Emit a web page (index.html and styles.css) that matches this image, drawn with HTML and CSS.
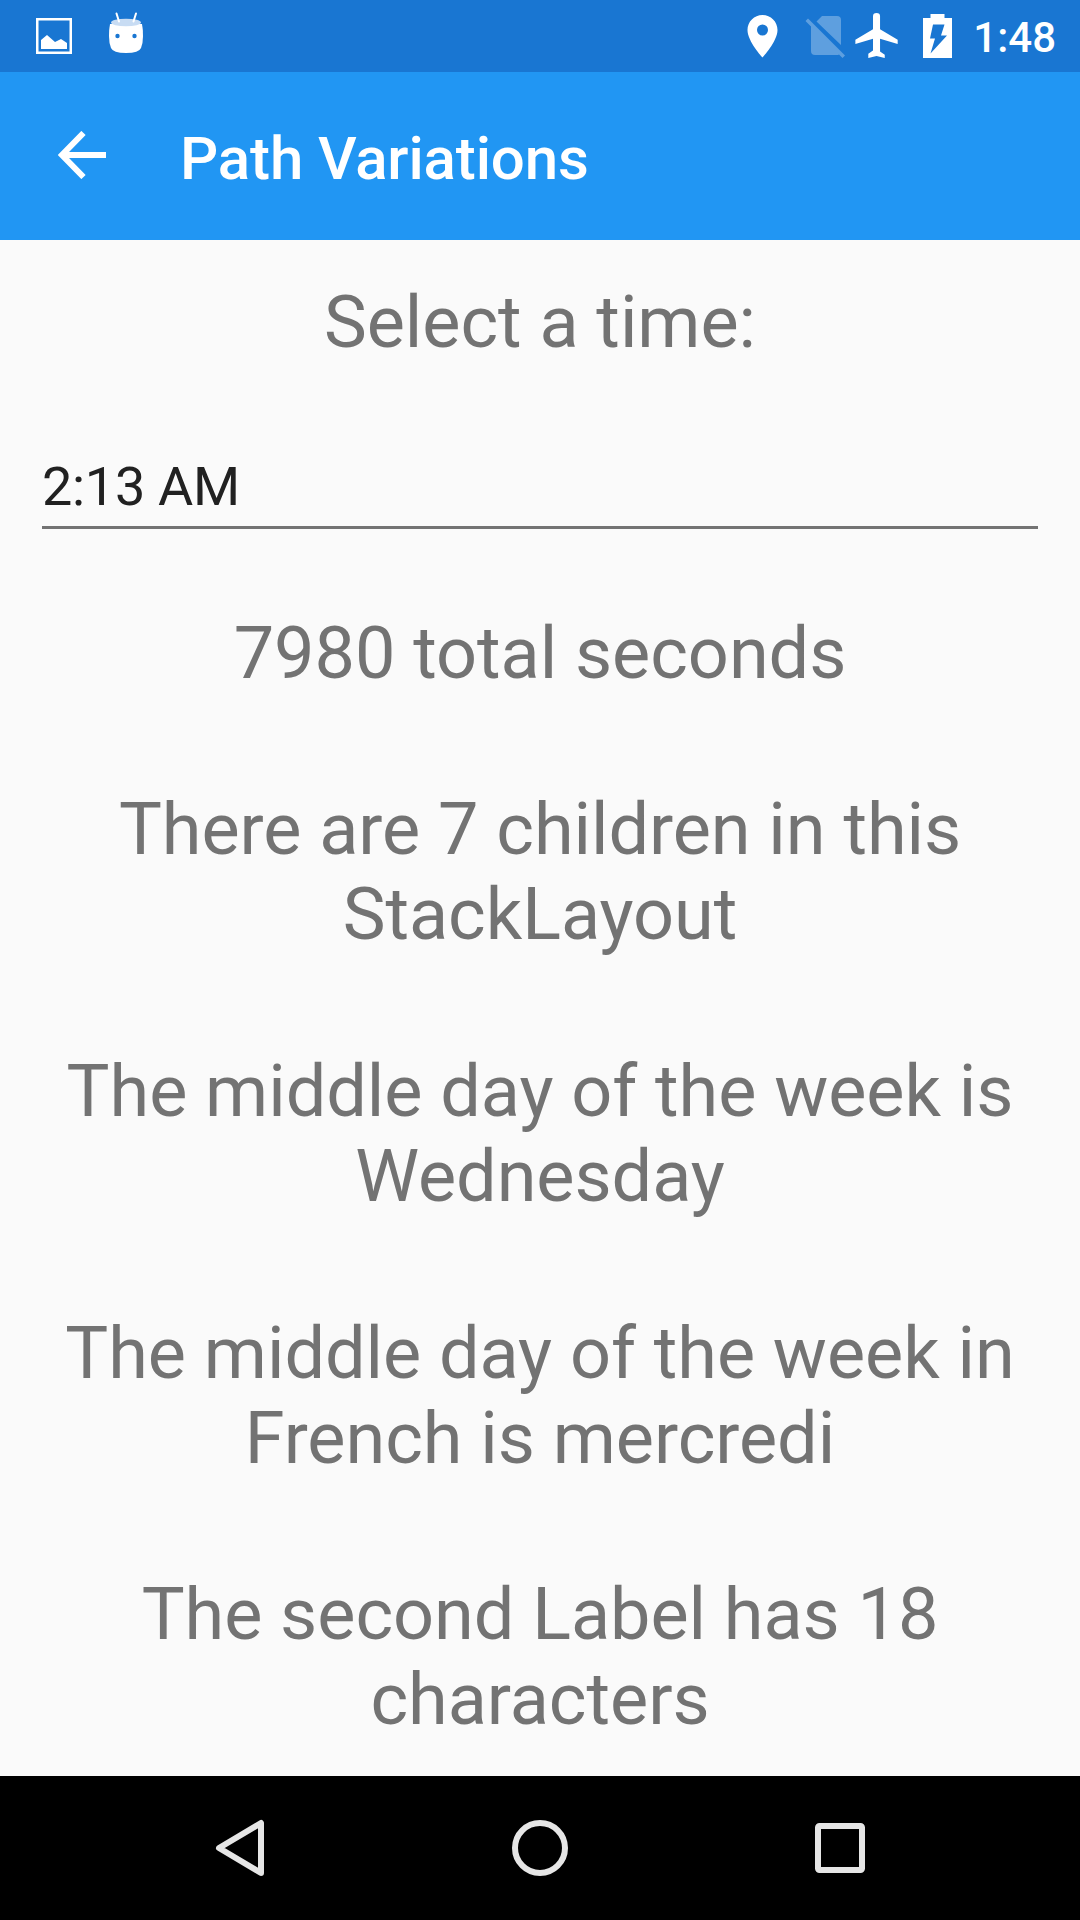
FILE: index.html
```html
<!DOCTYPE html>
<html lang="en"><head><meta charset="utf-8"><title>Path Variations</title><link rel="stylesheet" href="styles.css"></head>
<body>
<header class="status">
<svg class="status-icons" viewBox="0 0 1080 72">
<path fill="#fff" fill-rule="evenodd" d="M36 18h36v36H36zM38.500 20.500v31h31v-31z"/><path fill="#fff" d="M41 49v-9l6-5 8 7 6-3 6 4v6z"/>
<path fill="#fff" d="M110 24h32q1 5 1 12 0 7-2 12-2 5-15 5t-15-5q-2-5-2-12 0-7 1-12z"/><ellipse cx="126" cy="22.500" rx="15" ry="3.800" fill="#c8dcf3"/>
<path d="M119 21.500l-2.500-8M133.500 21.500l2.500-8" stroke="#fff" stroke-width="2" stroke-linecap="round"/><circle cx="117.500" cy="36" r="2.200" fill="#1976d2"/><circle cx="134.500" cy="36" r="2.200" fill="#1976d2"/>
<path fill="#fff" fill-rule="evenodd" d="M762.500 15c-8.300 0-15 6.700-15 15 0 11.300 15 27.500 15 27.500s15-16.200 15-27.500c0-8.300-6.700-15-15-15zm0 20.500a5.500 5.500 0 1 1 0-11 5.500 5.500 0 0 1 0 11z"/>
<path fill="#fff" opacity=".3" d="M822 16h15q4 0 4 4v25L816.500 21.500zM808 18.500L845 55.500 842.500 58 839 54.500Q838 55 837 55H815q-4 0-4-4V26.500L805.500 21z"/>
<path fill="#fff" transform="translate(849.500 8.800) scale(2.350 2.140)" d="M20.500 16.500v-2L13 9.500V3.500a1.500 1.500 0 0 0-3 0v6l-7.500 5v2l7.500-2.500v5.500l-2 1.500V23l3.500-1 3.500 1v-1.500L13 20v-6z"/>
<path fill="#fff" fill-rule="evenodd" d="M923 18h7.500v-4h14v4H952v40H923zM933 24.500l-3 14h5L930.500 53.500 947 35.500h-6l3.500-11z"/>
</svg><span class="clock">1:48</span></header>
<nav class="toolbar"><svg class="back" viewBox="0 0 48 48"><path d="M48 24H5M25.500 2L4 24l21.500 22" fill="none" stroke="#fff" stroke-width="6"/></svg><h1 class="title">Path Variations</h1></nav>
<main class="content"><p class="label first">Select a time:</p><div class="time">2:13 AM</div><p class="label">7980 total seconds</p><p class="label">There are 7 children in this<br>StackLayout</p><p class="label">The middle day of the week is<br>Wednesday</p><p class="label">The middle day of the week in<br>French is mercredi</p><p class="label">The second Label has 18<br>characters</p></main>
<footer class="navigation"><svg viewBox="0 0 1080 144" fill="none" stroke="#e6e6e6" stroke-width="6"><path stroke-linejoin="round" d="M261 47v50L219 72z"/><circle cx="540" cy="72" r="25"/><rect x="818" y="50" width="44" height="44" rx="1.500"/></svg></footer>
</body></html>
```
FILE: styles.css
```css
*{box-sizing:border-box}
body{margin:0;width:1080px;height:1920px;display:flex;flex-direction:column;background:#fafafa;font-family:Roboto,sans-serif;overflow:hidden}
.status{height:72px;flex:none;background:#1976d2;display:grid;color:#fff}
.status>*{grid-area:1/1}
.status-icons{width:1080px;height:72px}
.clock{justify-self:end;align-self:center;margin:3px 24px 0 0;font-size:42px;line-height:48px;font-weight:500}
.toolbar{height:168px;flex:none;background:#2196f3;display:flex;align-items:center;color:#fff;padding-left:58px}
.back{width:48px;height:48px;margin-top:-2px}
.title{margin:6px 0 0 74px;font-size:60px;line-height:70px;font-weight:500;letter-spacing:-.13px}
.content{flex:1 1 0;min-height:0;display:flex;flex-direction:column}
.label{flex:none;margin:0 0 91.6px;text-align:center;color:#737373;font-size:72px;line-height:85px;letter-spacing:-.04px}
.first{margin:40px 0 0}
.time{flex:none;margin:72px 42px 81.8px;height:92px;border-bottom:3px solid #737373;color:#212121;font-size:54px;line-height:100px;letter-spacing:-.3px}
.navigation{height:144px;background:#000;flex:none}
.navigation svg{display:block;width:1080px;height:144px}
```
